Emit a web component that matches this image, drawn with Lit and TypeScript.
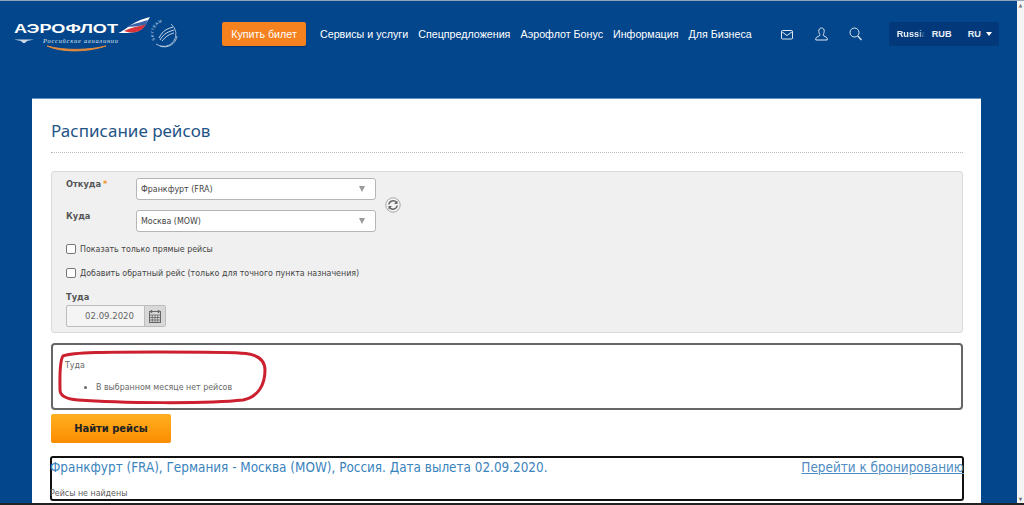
import { LitElement, html, css } from "lit";
import { customElement } from "lit/decorators.js";

@customElement("app-root")
export class AppRoot extends LitElement {
  static styles = css`
    :host { display: block; width: 1024px; height: 505px; overflow: hidden; font-family: "DejaVu Sans", sans-serif; font-stretch: condensed; }
    .page { height: 505px; display: flex; flex-direction: column; border-top: 1px solid #8fa6bf; border-bottom: 2px solid #222; box-sizing: border-box; }
    .window { flex: 1; min-height: 0; display: flex; }
    .content { flex: 1; min-width: 0; background: #03468c; overflow: hidden; }
    .scroll { width: 7px; background: #f4f4f4; display: flex; flex-direction: column; justify-content: space-between; align-items: center; color: #777; font-size: 5px; line-height: 8px; }
    header { height: 97px; box-sizing: border-box; padding: 13px 0 0 14px; display: flex; align-items: flex-start; }
    .bar { height: 40px; display: flex; align-items: center; }
    .logo { display: block; width: 168px; height: 40px; }
    .buy { margin-left: 40px; width: 84px; height: 24px; box-sizing: border-box; background: #f5811f; color: #fff; border-radius: 2px; font: 10.7px/24px "Liberation Sans", sans-serif; text-align: center; box-shadow: 0 1px 1px #02366e; }
    nav { margin-left: 14px; display: flex; gap: 10px; color: #fff; font: 10.7px "Liberation Sans", sans-serif; white-space: nowrap; }
    .icons { margin-left: 29px; display: flex; gap: 21px; align-items: center; }
    .icons svg { display: block; fill: none; stroke: #dfe8f2; stroke-width: 1; }
    .locale { margin-left: 27px; width: 110px; height: 24px; background: #03397a; border-radius: 2px; display: flex; align-items: center; color: #e9eff6; font: bold 9.2px "Liberation Sans", sans-serif; box-sizing: border-box; padding-left: 8px; }
    .country { width: 28px; overflow: hidden; white-space: nowrap; -webkit-mask-image: linear-gradient(90deg, #000 75%, transparent); mask-image: linear-gradient(90deg, #000 75%, transparent); }
    .cur { margin-left: 7px; width: 36px; }
    .caret { margin-left: 5px; width: 0; height: 0; border: 3.5px solid transparent; border-top: 4px solid #fff; border-bottom: 0; }
    .panel { position: relative; width: 949px; height: 405px; margin-left: 32px; background: #fff; box-sizing: border-box; padding: 0 18px 0 19px; border-top: 1px solid #5e90c2; overflow: hidden; }
    h1 { margin: 0; height: 54px; box-sizing: border-box; padding-top: 20px; font: 400 17px/24px "Noto Sans", sans-serif; color: #1f5587; border-bottom: 1px dotted #bbb; }
    .form { margin-top: 18px; height: 162px; box-sizing: border-box; background: #f0f0f0; border: 1px solid #dadada; border-radius: 3px; padding: 6px 14px 0; font-size: 8.8px; color: #444; }
    .route { display: flex; align-items: center; }
    .fields { display: flex; flex-direction: column; gap: 10px; }
    .row { display: flex; align-items: center; }
    .lbl { font-weight: bold; color: #555; font-size: 9.2px; }
    .row .lbl { width: 70px; margin-top: -12px; }
    .req { color: #f5962a; margin-left: -1px; }
    .select { width: 240px; height: 22px; box-sizing: border-box; border: 1px solid #b5b5b5; border-radius: 3px; background: #fff; padding: 0 10px 0 4px; display: flex; align-items: center; justify-content: space-between; color: #444; }
    .arrow { width: 0; height: 0; border: 3px solid transparent; border-top: 6px solid #999; border-bottom: 0; }
    .swap { display: block; margin-left: 9px; }
    .check { display: flex; align-items: center; gap: 4px; height: 13px; margin-top: 11px; }
    .check:first-of-type { margin-top: 10px; }
    .check input { appearance: none; -webkit-appearance: none; margin: 0; background: #fff; border: 1px solid #777; border-radius: 2px; box-sizing: content-box; width: 8px; height: 8px; }
    .to { margin-top: 12px; line-height: 12px; }
    .date { margin-top: 2px; width: 100px; height: 22px; display: flex; box-sizing: border-box; border: 1px solid #bdbdbd; border-radius: 2px; background: #f4f4f4; color: #666; font-size: 9.5px; }
    .dv { flex: 1; text-align: right; padding-right: 10px; line-height: 20px; }
    .db { width: 20px; background: #d8d8d8; border-left: 1px solid #bdbdbd; display: flex; align-items: center; justify-content: center; }
    .msg { margin-top: 10px; height: 67px; box-sizing: border-box; border: 2px solid #666; border-radius: 4px; padding: 15px 12px 0; font-size: 8.8px; color: #666; }
    .msg ul { margin: 12px 0 0; padding-left: 31px; }
    .find { margin-top: 4px; width: 120px; height: 29px; background: linear-gradient(#ffb020, #fc8c00); border-radius: 2px; color: #222; font: bold 11px/29px "DejaVu Sans", sans-serif; font-stretch: condensed; text-align: center; }
    .results { margin: 13px 0 0 -1px; width: 914px; height: 45px; box-sizing: border-box; border: 2px solid #111; border-radius: 3px; color: #5c5c5c; font-size: 8.8px; }
    .rh { display: flex; justify-content: space-between; color: #3a83bd; font-size: 13.4px; margin-left: -2px; margin-right: -2px; line-height: 19px; white-space: nowrap; }
    .rh a { text-decoration: underline; color: #4f8cc2; }
    .none { margin: 10px 0 0 -2px; line-height: 12px; }
    .oval { position: absolute; left: 26px; top: 251px; }
  `;

  render() {
    return html`<div class="page">
      <div class="window">
        <div class="content">
          <header>
            <div class="bar">
              <svg class="logo" viewBox="14 14 168 40">
                <text x="14" y="33" fill="#fff" font-family="Liberation Sans" font-weight="700" font-size="13.5" textLength="104" lengthAdjust="spacingAndGlyphs">АЭРОФЛОТ</text>
                <path d="M118 33 C127 30 130 22 150 17 C146 23 145 29 136 32 C130 33 124 33 118 33Z" fill="#fff"/>
                <path d="M124 31 C130 28 136 27 146 24 C144 28 141 31 136 32 C131 33 127 32 124 31Z" fill="#d9343a"/>
                <path d="M127 27 C132 24 138 23 148 20 C147 22 146 24 145 25 C138 26 132 27 127 27Z" fill="#3a62a8"/>
                <path d="M14 39.5 H34 L27 41 L25 43 H23 L21 41Z" fill="#cfdbe8"/>
                <text x="43" y="42.5" fill="#dfe8f2" font-family="Liberation Serif" font-style="italic" font-size="6.4" textLength="75">Российские авиалинии</text>
                <path d="M47 46 C60 52 85 53 106 46 C90 50 65 51 47 46Z" fill="#e58a3a" stroke="#e58a3a" stroke-width="1"/>
                <defs><path id="sky" d="M155 40 A12.5 12.5 0 0 1 172 23"/></defs>
                <text fill="#dfe8f2" font-family="Liberation Sans" font-size="3.8" letter-spacing=".6"><textPath href="#sky">SKYTEAM</textPath></text>
                <path d="M171 24 A12.5 12.5 0 0 1 156 44 M160 46 A12.5 12.5 0 0 0 177 36" fill="none" stroke="#dfe8f2" stroke-width=".7"/>
                <path d="M159 38 C163 30 167 29 173 27 M160 40 C164 33 168 32 174 30 M162 41 C166 36 170 34 174 33" fill="none" stroke="#dfe8f2" stroke-width=".9"/>
              </svg>
              <div class="buy">Купить билет</div>
              <nav><span>Сервисы и услуги</span><span>Спецпредложения</span><span>Аэрофлот Бонус</span><span>Информация</span><span>Для Бизнеса</span></nav>
              <div class="icons">
                <svg width="13" height="11" viewBox="0 0 13 11"><rect x=".5" y="1.5" width="11" height="8.5" rx="1"/><path d="M.5 2.5 L6 6.5 L11.5 2.5"/></svg>
                <svg width="13" height="14" viewBox="0 0 13 14"><path d="M6.5 1 C4.5 1 3.6 2.6 3.8 4.5 C4 6.2 4.6 7.2 5 8 C5 9.2 1 9.6.8 11.5 V13 H12.2 V11.5 C12 9.6 8 9.2 8 8 C8.4 7.2 9 6.2 9.2 4.5 C9.4 2.6 8.5 1 6.5 1Z"/></svg>
                <svg width="13" height="14" viewBox="0 0 13 14"><circle cx="5.5" cy="5.5" r="4.5"/><path d="M8.8 9 L12.5 13" stroke-width="1.3"/></svg>
              </div>
              <div class="locale"><span class="country">Russia</span><span class="cur">RUB</span><span>RU</span><span class="caret"></span></div>
            </div>
          </header>
          <section class="panel">
            <h1>Расписание рейсов</h1>
            <div class="form">
              <div class="route">
                <div class="fields">
                  <div class="row"><span class="lbl">Откуда <span class="req">*</span></span><div class="select"><span>Франкфурт (FRA)</span><i class="arrow"></i></div></div>
                  <div class="row"><span class="lbl">Куда</span><div class="select"><span>Москва (MOW)</span><i class="arrow"></i></div></div>
                </div>
                <svg class="swap" width="16" height="16" viewBox="0 0 16 16"><circle cx="8" cy="8" r="7.2" fill="#f4f4f4" stroke="#a8a8a8"/><path d="M3.8 7.5 A4.3 4.3 0 0 1 11.5 5.5 M12.2 8.5 A4.3 4.3 0 0 1 4.5 10.5" fill="none" stroke="#666" stroke-width="1.5"/><path d="M12.5 3.5 V7 H9Z M3.5 12.5 V9 H7Z" fill="#666"/></svg>
              </div>
              <label class="check"><input type="checkbox" /><span>Показать только прямые рейсы</span></label>
              <label class="check"><input type="checkbox" /><span>Добавить обратный рейс (только для точного пункта назначения)</span></label>
              <div class="lbl to">Туда</div>
              <div class="date"><span class="dv">02.09.2020</span><span class="db"><svg width="12" height="13" viewBox="0 0 12 13"><path d="M2.5 0v3M9.5 0v3" stroke="#666" stroke-width="1.4"/><rect x=".5" y="1.5" width="11" height="11" fill="none" stroke="#666"/><path d="M.5 5H11.5M.5 7.5H11.5M.5 10H11.5M3.3 5V12M6 5V12M8.7 5V12" stroke="#666" stroke-width=".8"/></svg></span></div>
            </div>
            <div class="msg">Туда<ul><li>В выбранном месяце нет рейсов</li></ul></div>
            <div class="find">Найти рейсы</div>
            <div class="results">
              <div class="rh"><span>Франкфурт (FRA), Германия - Москва (MOW), Россия. Дата вылета 02.09.2020.</span><a>Перейти к бронированию</a></div>
              <div class="none">Рейсы не найдены</div>
            </div>
            <svg class="oval" width="210" height="56" viewBox="0 0 210 56"><path d="M5 6 C15 2 50 2 100 2 C140 2 175 2 188 3.5 C200 5 207 10 207 20 C207 35 200 47 185 50 C150 54 60 53 20 50 C8 49 2 46 2 40 C2 30 1 12 5 6Z" fill="none" stroke="#cc1f2f" stroke-width="3"/></svg>
          </section>
        </div>
        <div class="scroll"><span>▲</span><span>▼</span></div>
      </div>
    </div>`;
  }
}
